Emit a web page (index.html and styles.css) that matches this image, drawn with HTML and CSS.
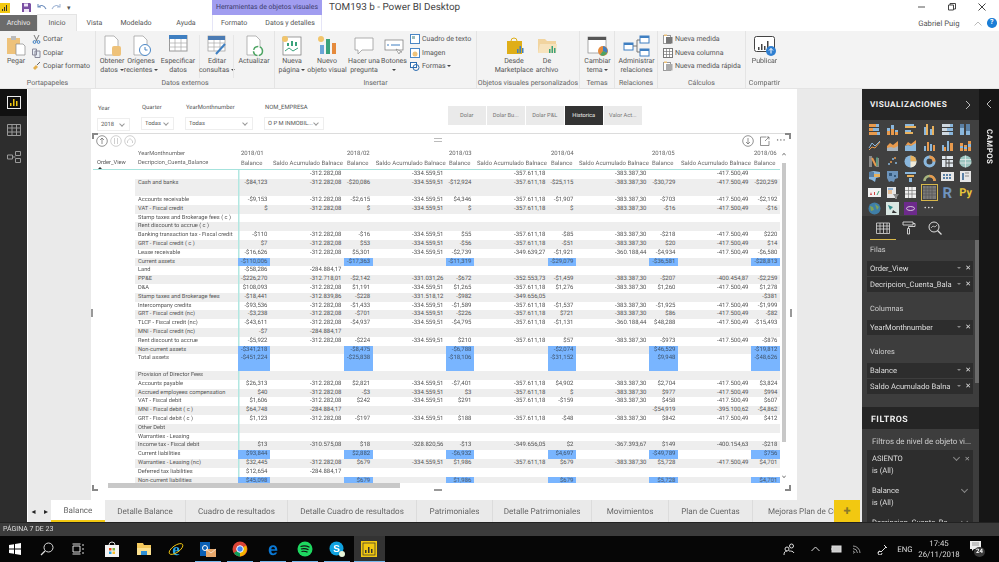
FILE: index.html
```html
<!DOCTYPE html>
<html lang="es">
<head>
<meta charset="utf-8">
<title>TOM193 b - Power BI Desktop</title>
<link rel="stylesheet" href="styles.css">
</head>
<body>
<div class="app">
  <header class="titlebar">
    <div class="qat">
      <svg class="pbi" width="10" height="10" viewBox="0 0 10 10"><rect width="10" height="10" fill="#f2c811"/><path d="M2 8V6h1v2zM4 8V4h1v4zM6 8V2h1v6z" fill="#333"/></svg>
      <svg class="save" width="11" height="11" viewBox="0 0 11 11"><path d="M1 1h8l1 1v8H1z" fill="#7a4fa3"/><path d="M3 1.500h4v3H3zM3 7h5v3H3z" fill="#efe6f7"/></svg>
      <svg class="undo" width="10" height="9" viewBox="0 0 10 9"><path d="M1 1v3h3M1.500 4C3 2 7 1.500 9 6" fill="none" stroke="#6f8fbd" stroke-width="1.100"/></svg>
      <svg class="redo" width="10" height="9" viewBox="0 0 10 9"><path d="M9 1v3H6M8.500 4C7 2 3 1.500 1 6" fill="none" stroke="#a4b8d6" stroke-width="1.100"/></svg>
      <span class="drop">▾</span>
    </div>
    <div class="contextual">Herramientas de objetos visuales</div>
    <div class="doc">TOM193 b - Power BI Desktop</div>
    <div class="winctl">
      <svg width="8" height="8" viewBox="0 0 8 8"><path d="M0 4h7" stroke="#555"/></svg>
      <svg width="8" height="8" viewBox="0 0 8 8"><path d="M.5 2h5v5h-5zM2 2V.5h5.500V6H6" fill="none" stroke="#444"/></svg>
      <svg width="8" height="8" viewBox="0 0 8 8"><path d="M.5.5l7 7M7.500.5l-7 7" stroke="#444"/></svg>
    </div>
  </header>
  <nav class="tabsbar">
    <span class="tab file">Archivo</span>
    <span class="tab home">Inicio</span>
    <span class="tab vista">Vista</span>
    <span class="tab modelado">Modelado</span>
    <span class="tab ayuda">Ayuda</span>
    <span class="ctx-tabs"><span>Formato</span><span>Datos y detalles</span></span>
    <span class="user">Gabriel Puig</span>
    <svg class="collapse" width="8" height="5" viewBox="0 0 8 5"><path d="M.5 4.500L4 1l3.500 3.500" fill="none" stroke="#bbb"/></svg>
    <span class="help">?</span>
  </nav>
  <section class="ribbon">
    <div class="group g-porta">
      <div class="items">
        <div class="item w32"><svg class="ic" width="22" height="22" viewBox="0 0 22 22"><rect x="2" y="3" width="13" height="16" fill="#eec27a"/><rect x="6" y="1" width="5" height="4" fill="#bbb"/><path d="M11 9h7l2 2v9h-9z" fill="#fff" stroke="#888" stroke-width=".7"/></svg><span>Pegar</span></div>
        <div class="smalls">
          <div class="small"><svg width="9" height="10" viewBox="0 0 9 10"><path d="M2 1l3 6M7 1L4 7" stroke="#777" fill="none"/><circle cx="2.500" cy="8" r="1.400" fill="none" stroke="#3f7fc1"/><circle cx="6.500" cy="8" r="1.400" fill="none" stroke="#3f7fc1"/></svg><span>Cortar</span></div>
          <div class="small"><svg width="9" height="10" viewBox="0 0 9 10"><path d="M.5 1h4v6h-4zM3 3h5v6.500H3z" fill="#e8eef5" stroke="#889"/></svg><span>Copiar</span></div>
          <div class="small"><svg width="9" height="10" viewBox="0 0 9 10"><path d="M1 7l3-3 2 2-3 3z" fill="#e4b04f"/><path d="M5 4l3-3" stroke="#666"/></svg><span>Copiar formato</span></div>
        </div>
      </div>
      <div class="glabel">Portapapeles</div>
    </div>
    <div class="group g-datos">
      <div class="items">
        <div class="item w28"><svg class="ic" width="22" height="22" viewBox="0 0 22 22"><path d="M4 1h9l4 4v15H4z" fill="#fff" stroke="#999" stroke-width=".7"/><rect x="11" y="11" width="9" height="10" rx="2" fill="#eec27a"/></svg><span>Obtener<br>datos <i class="car"></i></span></div>
        <div class="item w30"><svg class="ic" width="22" height="22" viewBox="0 0 22 22"><path d="M4 1h9l4 4v15H4z" fill="#fff" stroke="#999" stroke-width=".7"/><circle cx="15" cy="15" r="5.500" fill="#fff" stroke="#4a86c5"/><path d="M15 12v3h2.500" stroke="#4a86c5" fill="none"/></svg><span>Orígenes<br>recientes <i class="car"></i></span></div>
        <div class="item w44"><svg class="ic" width="22" height="22" viewBox="0 0 22 22"><rect x="2.500" y=".5" width="17.500" height="15.500" fill="#fff" stroke="#999"/><rect x="2" y="0" width="18" height="4" fill="#3f7fc1"/><path d="M2 8h18M2 12h18M8 4v12M14 4v12" stroke="#aaa" stroke-width=".7"/></svg><span>Especificar<br>datos</span></div>
        <div class="item w34 sep"><svg class="ic" width="22" height="22" viewBox="0 0 22 22"><rect x="2" y="1" width="17" height="15" fill="#fff" stroke="#999" stroke-width=".7"/><rect x="2" y="1" width="17" height="4" fill="#4b7bb3"/><path d="M2 8h17M2 12h17M8 5v11M14 5v11" stroke="#aaa" stroke-width=".7"/><path d="M10 19l9-10" stroke="#3f7fc1" stroke-width="2"/></svg><span>Editar<br>consultas <i class="car"></i></span></div>
        <div class="item w40 sep"><svg class="ic" width="22" height="22" viewBox="0 0 22 22"><path d="M4 1h9l4 4v15H4z" fill="#fff" stroke="#999" stroke-width=".7"/><circle cx="15" cy="16" r="4.500" fill="#fff" stroke="#4da463" stroke-width="1.500" stroke-dasharray="6 1.500"/></svg><span>Actualizar</span></div>
      </div>
      <div class="glabel">Datos externos</div>
    </div>
    <div class="group g-insertar">
      <div class="items">
        <div class="item w30"><svg class="ic" width="22" height="22" viewBox="0 0 22 22"><rect x="2" y="2" width="18" height="18" fill="#fff" stroke="#777" stroke-width=".7"/><circle cx="4" cy="4" r="3" fill="#f2c56b"/><path d="M6 11V8h2v3zM10 11V6h2v5zM14 11V7h2v4z" fill="#3aa27b"/><path d="M4 16l4-3 4 3 5-3" stroke="#3aa27b" fill="none"/></svg><span>Nueva<br>página <i class="car"></i></span></div>
        <div class="item w40"><svg class="ic" width="22" height="22" viewBox="0 0 22 22"><circle cx="5" cy="4" r="3" fill="#f2c56b"/><rect x="4" y="10" width="4" height="9" fill="#6ba5d8"/><rect x="10" y="4" width="4" height="15" fill="#3aa27b"/><rect x="16" y="8" width="4" height="11" fill="#e58a3c"/></svg><span>Nuevo<br>objeto visual</span></div>
        <div class="item w34"><svg class="ic" width="22" height="22" viewBox="0 0 22 22"><path d="M2 3h18v12H9l-4 4v-4H2z" fill="#fff" stroke="#999" stroke-width=".8"/></svg><span>Hacer una<br>pregunta</span></div>
        <div class="item w26"><svg class="ic" width="22" height="22" viewBox="0 0 22 22"><rect x="2" y="5" width="18" height="10" fill="#fff" stroke="#777" stroke-width=".7"/><path d="M4 10h2M8 10h9" stroke="#3f7fc1"/><path d="M13 14l3 5 1-2 2 0z" fill="#fff" stroke="#777" stroke-width=".6"/></svg><span>Botones<br><i class="car"></i></span></div>
        <div class="smalls s-ins">
          <div class="small"><svg width="10" height="10" viewBox="0 0 10 10"><rect x=".5" y=".5" width="9" height="9" fill="#fff" stroke="#4a86c5"/><path d="M2 2h3v3H2z" fill="#9bb"/></svg><span>Cuadro de texto</span></div>
          <div class="small"><svg width="10" height="10" viewBox="0 0 10 10"><rect x=".5" y=".5" width="9" height="9" fill="#fff" stroke="#4a86c5"/><circle cx="5" cy="6" r="2.500" fill="#eec27a"/></svg><span>Imagen</span></div>
          <div class="small"><svg width="10" height="10" viewBox="0 0 10 10"><rect x=".5" y="1.500" width="6" height="5" fill="#fff" stroke="#2c6cb0"/><circle cx="6" cy="6.500" r="3" fill="none" stroke="#2c6cb0"/></svg><span>Formas <i class="car"></i></span></div>
        </div>
      </div>
      <div class="glabel">Insertar</div>
    </div>
    <div class="group g-obj">
      <div class="items">
        <div class="item w34"><svg class="ic" width="22" height="22" viewBox="0 0 22 22"><path d="M4 6h15v13H4z" fill="#dfae18"/><path d="M8 6a3 3 0 016 0" stroke="#dfae18" fill="none"/><path d="M14 18v-4h1.500v4zM16.500 18v-7H18v7zM19 18v-5h1.500v5z" fill="#3f7fc1"/></svg><span>Desde<br>Marketplace</span></div>
        <div class="item w32"><svg class="ic" width="22" height="22" viewBox="0 0 22 22"><path d="M2 7V4h7l2 2h9v12H2z" fill="#f1d49f"/><path d="M2 18l2-9h17l-1 9z" fill="#f7e3bd"/><path d="M13 18v-4h1.500v4zM15.500 18v-7H17v7zM18 18v-5h1.500v5z" fill="#3aa27b"/></svg><span>De<br>archivo</span></div>
      </div>
      <div class="glabel">Objetos visuales personalizados</div>
    </div>
    <div class="group g-temas">
      <div class="items">
        <div class="item w35"><svg class="ic" width="22" height="22" viewBox="0 0 22 22"><rect x="1" y="2" width="18" height="16" fill="#fff" stroke="#888" stroke-width=".7"/><rect x="1" y="2" width="18" height="3" fill="#555"/><circle cx="16" cy="16" r="5" fill="#e58a3c"/><path d="M16 16V11a5 5 0 014 7z" fill="#3f7fc1"/><path d="M16 16l4 2a5 5 0 01-7 2z" fill="#4da463"/></svg><span>Cambiar<br>tema <i class="car"></i></span></div>
      </div>
      <div class="glabel">Temas</div>
    </div>
    <div class="group g-rel">
      <div class="items">
        <div class="item w43"><svg class="ic" width="30" height="22" viewBox="0 0 30 22"><rect x="2" y="8" width="9" height="7" fill="#fff" stroke="#3f7fc1"/><rect x="2" y="8" width="9" height="2" fill="#3f7fc1"/><rect x="18" y="1" width="9" height="7" fill="#fff" stroke="#3f7fc1"/><rect x="18" y="1" width="9" height="2" fill="#3f7fc1"/><rect x="18" y="14" width="9" height="7" fill="#fff" stroke="#3f7fc1"/><rect x="18" y="14" width="9" height="2" fill="#3f7fc1"/><path d="M11 11h4V5h3M15 11v6h3" stroke="#777" fill="none"/></svg><span>Administrar<br>relaciones</span></div>
      </div>
      <div class="glabel">Relaciones</div>
    </div>
    <div class="group g-calc">
      <div class="items">
        <div class="smalls s-calc">
          <div class="small"><svg width="10" height="10" viewBox="0 0 10 10"><rect x=".5" y="1.500" width="7" height="8" fill="#fff" stroke="#999"/><rect x="3" y="3" width="6.500" height="6.500" fill="#777"/><rect x="1" y=".5" width="3" height="1.500" fill="#eec27a"/></svg><span>Nueva medida</span></div>
          <div class="small"><svg width="10" height="10" viewBox="0 0 10 10"><rect x=".5" y=".5" width="9" height="9" fill="#fff" stroke="#777"/><path d="M.5 3.500h9M.5 6.500h9M3.500.5v9M6.500.5v9" stroke="#777" stroke-width=".7"/></svg><span>Nueva columna</span></div>
          <div class="small"><svg width="10" height="10" viewBox="0 0 10 10"><rect x=".5" y="1.500" width="7" height="8" fill="#fff" stroke="#999"/><rect x="3" y="3" width="6.500" height="6.500" fill="#aaa"/><rect x="1" y=".5" width="3" height="1.500" fill="#eec27a"/></svg><span>Nueva medida rápida</span></div>
        </div>
      </div>
      <div class="glabel">Cálculos</div>
    </div>
    <div class="group g-comp">
      <div class="items">
        <div class="item w37"><svg class="ic" width="24" height="22" viewBox="0 0 24 22"><rect x="1.500" y="1.500" width="20" height="15" rx="2" fill="#fff" stroke="#444"/><path d="M5 15v-3h1.500v3zM8 15v-6h1.500v6zM11 15v-4h1.500v4zM14 15V6h1.500v9z" fill="#444"/><circle cx="18" cy="16" r="5" fill="#2f7fd1"/><path d="M18 13.500v5M16 15.500l2-2 2 2" stroke="#fff" fill="none"/></svg><span>Publicar</span></div>
      </div>
      <div class="glabel">Compartir</div>
    </div>
  </section>

  <main class="workspace">
    <aside class="leftnav">
      <div class="navitem on"><svg width="14" height="13" viewBox="0 0 14 13"><rect x=".5" y=".5" width="13" height="12" fill="none" stroke="#eee"/><path d="M3 10V7h1.500v3zM6 10V3h1.500v7zM9 10V5h1.500v5z" fill="#f2c811"/></svg></div>
      <div class="navitem"><svg width="14" height="12" viewBox="0 0 14 12"><path d="M.5.5h13v11H.5zM.5 4h13M.5 8h13M5 .5v11M9.500.5v11" fill="none" stroke="#9a9a9a"/></svg></div>
      <div class="navitem"><svg width="14" height="12" viewBox="0 0 14 12"><path d="M.5 4h5v4h-5zM8.500.5h5v4h-5zM8.500 7.500h5v4h-5zM5.500 6h3" fill="none" stroke="#9a9a9a"/></svg></div>
    </aside>
    <div class="center">
      <div class="stage">
        <div class="canvas">
          <div class="filters">
            <div class="slicer s-year"><label>Year</label><div class="sbox"><span>2018</span><i class="chev"></i></div></div>
            <div class="slicer s-quarter"><label>Quarter</label><div class="sbox"><span>Todas</span><i class="chev"></i></div></div>
            <div class="slicer s-ym"><label>YearMonthnumber</label><div class="sbox"><span>Todas</span><i class="chev"></i></div></div>
            <div class="slicer s-nom"><label>NOM_EMPRESA</label><div class="sbox"><span>O P M INMOBIL...</span><i class="chev"></i></div></div>
            <div class="btns">
              <span>Dolar</span><span>Dolar Bu...</span><span>Dolar P&amp;L</span><span class="active">Historica</span><span>Valor Act...</span>
            </div>
          </div>
          <div class="visual">
            <i class="corner tl"></i><i class="corner tr"></i><i class="corner bl"></i><i class="corner br"></i>
            <i class="grip gl"></i><i class="grip gr"></i><i class="grip gt"></i><i class="grip gb"></i>
            <div class="vhead">
              <div class="vleft">
                <svg width="12" height="12" viewBox="0 0 12 12"><circle cx="6" cy="6" r="5.300" fill="none" stroke="#666" stroke-width=".7"/><path d="M6 9V3M4 5l2-2 2 2" fill="none" stroke="#666" stroke-width=".7"/></svg>
                <svg width="12" height="12" viewBox="0 0 12 12"><circle cx="6" cy="6" r="5.300" fill="none" stroke="#bbb" stroke-width=".7"/><path d="M4.500 3v6M7.500 3v6" stroke="#bbb" stroke-width=".7"/></svg>
                <svg width="12" height="12" viewBox="0 0 12 12"><circle cx="6" cy="6" r="5.300" fill="none" stroke="#bbb" stroke-width=".7"/><path d="M3.500 8V6l2.500-2.500L8.500 6v2" fill="none" stroke="#bbb" stroke-width=".7"/></svg>
              </div>
              <div class="vright">
                <svg width="12" height="12" viewBox="0 0 12 12"><circle cx="6" cy="6" r="5.300" fill="none" stroke="#666" stroke-width=".7"/><path d="M6 3v6M4 7l2 2 2-2" fill="none" stroke="#666" stroke-width=".7"/></svg>
                <svg width="10" height="10" viewBox="0 0 10 10"><path d="M6 1H.5v8.500H9V5M5 5l4-4M6.500 1H9v2.500" fill="none" stroke="#666" stroke-width=".7"/></svg>
                <span class="dots">···</span>
              </div>
            </div>
            <div class="matrix">
              <div class="r h1"><span></span><span>YearMonthnumber</span><span>2018/01</span><span></span><span>2018/02</span><span></span><span>2018/03</span><span></span><span>2018/04</span><span></span><span>2018/05</span><span></span><span>2018/06</span></div>
              <div class="r h2"><span class="order">Order_View</span><span>Decripcion_Cuenta_Balance</span><span>Balance</span><span>Saldo Acumulado Balnace</span><span>Balance</span><span>Saldo Acumulado Balnace</span><span>Balance</span><span>Saldo Acumulado Balnace</span><span>Balance</span><span>Saldo Acumulado Balnace</span><span>Balance</span><span>Saldo Acumulado Balnace</span><span>Balance</span></div>
              <div class="tbody">
                <div class="r"><span></span><span></span><span></span><span>-312.282,08</span><span></span><span>-334.559,51</span><span></span><span>-357.611,18</span><span></span><span>-383.387,30</span><span></span><span>-417.500,49</span><span></span></div>
                <div class="r g tall"><span></span><span>Cash and banks</span><span>-$84,123</span><span>-312.282,08</span><span>-$20,086</span><span>-334.559,51</span><span>-$12,924</span><span>-357.611,18</span><span>-$25,115</span><span>-383.387,30</span><span>-$30,729</span><span>-417.500,49</span><span>-$20,259</span></div>
                <div class="r"><span></span><span>Accounts receivable</span><span>-$9,153</span><span>-312.282,08</span><span>-$2,615</span><span>-334.559,51</span><span>$4,346</span><span>-357.611,18</span><span>-$1,907</span><span>-383.387,30</span><span>-$703</span><span>-417.500,49</span><span>-$2,192</span></div>
                <div class="r g"><span></span><span>VAT - Fiscal credit</span><span>$</span><span>-312.282,08</span><span>$</span><span>-334.559,51</span><span>$</span><span>-357.611,18</span><span>$</span><span>-383.387,30</span><span>-$16</span><span>-417.500,49</span><span>-$16</span></div>
                <div class="r"><span></span><span>Stamp taxes and Brokerage fees ( c )</span><span></span><span></span><span></span><span></span><span></span><span></span><span></span><span></span><span></span><span></span><span></span></div>
                <div class="r g"><span></span><span>Rent discount to accrue ( c )</span><span></span><span></span><span></span><span></span><span></span><span></span><span></span><span></span><span></span><span></span><span></span></div>
                <div class="r"><span></span><span>Banking transaction tax - Fiscal credit</span><span>-$110</span><span>-312.282,08</span><span>-$16</span><span>-334.559,51</span><span>$55</span><span>-357.611,18</span><span>-$85</span><span>-383.387,30</span><span>-$218</span><span>-417.500,49</span><span>$220</span></div>
                <div class="r g"><span></span><span>GRT - Fiscal credit ( c )</span><span>$7</span><span>-312.282,08</span><span>$53</span><span>-334.559,51</span><span>-$56</span><span>-357.611,18</span><span>-$51</span><span>-383.387,30</span><span>$20</span><span>-417.500,49</span><span>$14</span></div>
                <div class="r"><span></span><span>Lease receivable</span><span>-$16,626</span><span>-312.282,08</span><span>$5,301</span><span>-334.559,51</span><span>-$2,739</span><span>-349.639,27</span><span>-$1,921</span><span>-360.188,44</span><span>-$4,934</span><span>-417.500,49</span><span>-$6,580</span></div>
                <div class="r g"><span></span><span>Current assets</span><span class="h">-$110,006</span><span></span><span class="h">-$17,363</span><span></span><span class="h">-$11,319</span><span></span><span class="h">-$29,079</span><span></span><span class="h">-$36,581</span><span></span><span class="h">-$28,813</span></div>
                <div class="r"><span></span><span>Land</span><span>-$58,286</span><span>-284.884,17</span><span></span><span></span><span></span><span></span><span></span><span></span><span></span><span></span><span></span></div>
                <div class="r g"><span></span><span>PP&amp;E</span><span>-$226,270</span><span>-312.718,01</span><span>-$2,142</span><span>-331.031,26</span><span>-$672</span><span>-352.553,73</span><span>-$1,459</span><span>-383.387,30</span><span>-$207</span><span>-400.454,87</span><span>-$2,259</span></div>
                <div class="r"><span></span><span>D&amp;A</span><span>$108,093</span><span>-312.282,08</span><span>$1,191</span><span>-334.559,51</span><span>$1,265</span><span>-357.611,18</span><span>$1,276</span><span>-383.387,30</span><span>$1,260</span><span>-417.500,49</span><span>$1,278</span></div>
                <div class="r g"><span></span><span>Stamp taxes and Brokerage fees</span><span>-$18,441</span><span>-312.839,86</span><span>-$228</span><span>-331.518,12</span><span>-$982</span><span>-349.656,05</span><span></span><span></span><span></span><span></span><span>-$381</span></div>
                <div class="r"><span></span><span>Intercompany credits</span><span>-$93,536</span><span>-312.282,08</span><span>-$1,433</span><span>-334.559,51</span><span>-$1,589</span><span>-357.611,18</span><span>-$1,537</span><span>-383.387,30</span><span>-$1,925</span><span>-417.500,49</span><span>-$1,999</span></div>
                <div class="r g"><span></span><span>GRT - Fiscal credit (nc)</span><span>-$3,238</span><span>-312.282,08</span><span>-$701</span><span>-334.559,51</span><span>-$226</span><span>-357.611,18</span><span>$721</span><span>-383.387,30</span><span>$86</span><span>-417.500,49</span><span>-$82</span></div>
                <div class="r"><span></span><span>TLCF - Fiscal credit (nc)</span><span>-$43,611</span><span>-312.282,08</span><span>-$4,937</span><span>-334.559,51</span><span>-$4,795</span><span>-357.611,18</span><span>-$1,131</span><span>-360.188,44</span><span>$48,288</span><span>-417.500,49</span><span>-$15,493</span></div>
                <div class="r g"><span></span><span>MNI - Fiscal credit (nc)</span><span>-$7</span><span>-284.884,17</span><span></span><span></span><span></span><span></span><span></span><span></span><span></span><span></span><span></span></div>
                <div class="r"><span></span><span>Rent discount to accrue</span><span>-$5,922</span><span>-312.282,08</span><span>-$224</span><span>-334.559,51</span><span>$210</span><span>-357.611,18</span><span>$57</span><span>-383.387,30</span><span>-$973</span><span>-417.500,49</span><span>-$876</span></div>
                <div class="r g"><span></span><span>Non-current assets</span><span class="h">-$341,218</span><span></span><span class="h">-$8,475</span><span></span><span class="h">-$6,788</span><span></span><span class="h">-$2,074</span><span></span><span class="h">$46,529</span><span></span><span class="h">-$19,812</span></div>
                <div class="r tall2"><span></span><span>Total assets</span><span class="h">-$451,224</span><span></span><span class="h">-$25,838</span><span></span><span class="h">-$18,106</span><span></span><span class="h">-$31,152</span><span></span><span class="h">$9,948</span><span></span><span class="h">-$48,626</span></div>
                <div class="r g"><span></span><span>Provision of Director Fees</span><span></span><span></span><span></span><span></span><span></span><span></span><span></span><span></span><span></span><span></span><span></span></div>
                <div class="r"><span></span><span>Accounts payable</span><span>$26,313</span><span>-312.282,08</span><span>$2,821</span><span>-334.559,51</span><span>-$7,401</span><span>-357.611,18</span><span>$4,902</span><span>-383.387,30</span><span>$2,704</span><span>-417.500,49</span><span>$3,824</span></div>
                <div class="r g"><span></span><span>Accrued employees compensation</span><span>$40</span><span>-312.282,08</span><span>-$3</span><span>-334.559,51</span><span>$3</span><span>-357.611,18</span><span>$</span><span>-383.387,30</span><span>$977</span><span>-417.500,49</span><span>$994</span></div>
                <div class="r"><span></span><span>VAT - Fiscal debit</span><span>$1,606</span><span>-312.282,08</span><span>$242</span><span>-334.559,51</span><span>$291</span><span>-357.611,18</span><span>-$159</span><span>-383.387,30</span><span>$458</span><span>-417.500,49</span><span>$607</span></div>
                <div class="r g"><span></span><span>MNI - Fiscal debit ( c )</span><span>$64,748</span><span>-284.884,17</span><span></span><span></span><span></span><span></span><span></span><span></span><span>-$54,919</span><span>-395.100,62</span><span>-$4,862</span></div>
                <div class="r"><span></span><span>GRT - Fiscal debit ( c )</span><span>$1,123</span><span>-312.282,08</span><span>-$197</span><span>-334.559,51</span><span>$188</span><span>-357.611,18</span><span>-$48</span><span>-383.387,30</span><span>$842</span><span>-417.500,49</span><span>$412</span></div>
                <div class="r g"><span></span><span>Other Debt</span><span></span><span></span><span></span><span></span><span></span><span></span><span></span><span></span><span></span><span></span><span></span></div>
                <div class="r"><span></span><span>Warranties - Leasing</span><span></span><span></span><span></span><span></span><span></span><span></span><span></span><span></span><span></span><span></span><span></span></div>
                <div class="r g"><span></span><span>Income tax - Fiscal debit</span><span>$13</span><span>-310.575,08</span><span>$18</span><span>-328.820,56</span><span>-$13</span><span>-349.656,05</span><span>$2</span><span>-367.393,67</span><span>$149</span><span>-400.154,63</span><span>-$218</span></div>
                <div class="r"><span></span><span>Current liabilities</span><span class="h">$93,844</span><span></span><span class="h">$2,882</span><span></span><span class="h">-$6,932</span><span></span><span class="h">$4,697</span><span></span><span class="h">-$49,789</span><span></span><span class="h">$756</span></div>
                <div class="r g"><span></span><span>Warranties - Leasing (nc)</span><span>$32,445</span><span>-312.282,08</span><span>$679</span><span>-334.559,51</span><span>$1,986</span><span>-357.611,18</span><span>$679</span><span>-383.387,30</span><span>$5,728</span><span>-417.500,49</span><span>$4,701</span></div>
                <div class="r"><span></span><span>Deferred tax liabilities</span><span>$12,654</span><span>-284.884,17</span><span></span><span></span><span></span><span></span><span></span><span></span><span></span><span></span><span></span></div>
                <div class="r g"><span></span><span>Non-current liabilities</span><span class="h">$45,098</span><span></span><span class="h">$679</span><span></span><span class="h">$1,986</span><span></span><span class="h">$679</span><span></span><span class="h">$5,728</span><span></span><span class="h">$4,701</span></div>
              </div>
              <div class="vscroll"><i class="up"></i><b></b><i class="down"></i></div>
              <div class="hscroll"><b></b></div>
            </div>
          </div>
        </div>
      </div>
      <div class="pagetabs">
        <span class="nav n1">◂</span><span class="nav n2">▸</span>
        <span class="pt on w-bal">Balance</span>
        <span class="pt w-dbal">Detalle Balance</span>
        <span class="pt w-cua">Cuadro de resultados</span>
        <span class="pt w-dcua">Detalle Cuadro de resultados</span>
        <span class="pt w-pat">Patrimoniales</span>
        <span class="pt w-dpat">Detalle Patrimoniales</span>
        <span class="pt w-mov">Movimientos</span>
        <span class="pt w-plan">Plan de Cuentas</span>
        <span class="pt w-mej">Mejoras Plan de Cuentas</span>
        <span class="plus">+</span>
      </div>
    </div>
    <aside class="vizpanel">
      <div class="phead"><span>VISUALIZACIONES</span><svg width="6" height="10" viewBox="0 0 6 10"><path d="M1 1l4 4-4 4" fill="none" stroke="#bbb"/></svg></div>
      <div class="vizgrid">
        <svg viewBox="0 0 13 13"><path d="M1 1h7v3H1z" fill="#e89a4d"/><path d="M8 1h3v3H8z" fill="#8ab7dd"/><path d="M1 5h4v3H1z" fill="#e89a4d"/><path d="M5 5h6v3H5z" fill="#8ab7dd"/><path d="M1 9h8v3H1z" fill="#e89a4d"/><path d="M9 9h3v3H9z" fill="#8ab7dd"/></svg>
        <svg viewBox="0 0 13 13"><path d="M1 5h3v7H1zM5 2h3v10H5zM9 7h3v5H9z" fill="#8ab7dd"/><path d="M1 8h3v4H1zM5 6h3v6H5zM9 9h3v3H9z" fill="#e89a4d"/></svg>
        <svg viewBox="0 0 13 13"><path d="M1 1h9v2H1zM1 7h6v2H1z" fill="#8ab7dd"/><path d="M1 3h11v2H1zM1 9h8v2H1z" fill="#e8b15d"/></svg>
        <svg viewBox="0 0 13 13"><path d="M1 4h2v8H1zM7 6h2v6H7z" fill="#8ab7dd"/><path d="M3 1h2v11H3zM9 3h2v9H9z" fill="#e8b15d"/></svg>
        <svg viewBox="0 0 13 13"><path d="M1 1h8v3H1zM1 9h7v3H1zM1 5h5v3H1z" fill="#cfd8e0"/><path d="M9 1h3v3H9zM8 9h4v3H8zM6 5h6v3H6z" fill="#8ab7dd"/></svg>
        <svg viewBox="0 0 13 13"><path d="M1 1h4v11H1zM7 1h4v11H7z" fill="#8ab7dd"/><path d="M1 1h4v4H1zM7 1h4v7H7z" fill="#5a80a5"/></svg>
        <svg viewBox="0 0 13 13"><path d="M1 11l3-3 3 1 5-6" fill="none" stroke="#e89a4d"/><path d="M1 9l3-5 3 3 5-5" fill="none" stroke="#8ab7dd"/></svg>
        <svg viewBox="0 0 13 13"><path d="M1 12V7l3-3 3 2 5-4v10z" fill="#e89a4d"/><path d="M1 12V9l4-1 3 1 4-2v5z" fill="#aab4bc"/></svg>
        <svg viewBox="0 0 13 13"><path d="M1 7l3-4 3 2 5-4v5L7 7 4 6z" fill="#e89a4d"/><path d="M1 12V7l3-1 3 1 5-3v8z" fill="#8ab7dd"/></svg>
        <svg viewBox="0 0 13 13"><path d="M1 7h2v5H1zM7 5h2v7H7z" fill="#8ab7dd"/><path d="M4 3h2v9H4zM10 6h2v6h-2z" fill="#e89a4d"/></svg>
        <svg viewBox="0 0 13 13"><path d="M1 6h2v6H1zM6 2h2v10H6z" fill="#8ab7dd"/><path d="M3 8h2v4H3zM9 4h3v8H9z" fill="#e89a4d"/></svg>
        <svg viewBox="0 0 13 13"><path d="M1 4h3v8H1zM5 6h3v6H5zM9 2h3v10H9z" fill="#e89a4d"/><path d="M1 7h3v2H1zM5 8h3v2H5zM9 5h3v3H9z" fill="#8ab7dd"/></svg>
        <svg viewBox="0 0 13 13"><path d="M1 1h3v11H1zM8 3h3v9H8z" fill="#8a8a8a"/><path d="M4 3l4 8" stroke="#e89a4d" stroke-width="2"/><path d="M9 2v9" stroke="#3aa27b"/></svg>
        <svg viewBox="0 0 13 13"><g fill="#8ab7dd"><circle cx="3" cy="9" r="1"/><circle cx="7" cy="4" r="1"/><circle cx="10" cy="8" r="1"/></g><g fill="#e89a4d"><circle cx="5" cy="7" r="1"/><circle cx="9" cy="3" r="1"/></g></svg>
        <svg viewBox="0 0 13 13"><circle cx="6.500" cy="6.500" r="6" fill="#8ab7dd"/><path d="M6.500 6.500V.5a6 6 0 016 6z" fill="#e8b15d"/><path d="M6.500 6.500l6 0a6 6 0 01-6 6z" fill="#f0ead8"/></svg>
        <svg viewBox="0 0 13 13"><circle cx="6.500" cy="6.500" r="4.500" fill="none" stroke="#8ab7dd" stroke-width="3"/><path d="M6.500 2a4.500 4.500 0 014.500 4.500" fill="none" stroke="#e89a4d" stroke-width="3"/></svg>
        <svg viewBox="0 0 13 13"><rect x="1" y="1" width="11" height="11" fill="#dfe6ec"/><path d="M1 4.500h11M5 1v11M8 4.500v7.500M5 8h7" stroke="#444"/></svg>
        <svg viewBox="0 0 13 13"><circle cx="6.500" cy="6.500" r="6" fill="#9cc5c0"/><path d="M1 4.500h11M.5 8h12M6.500.5v12" stroke="#eee" stroke-width=".7"/></svg>
        <svg viewBox="0 0 13 13"><path d="M1 2l5-1 6 1v5l-4 1-1 4-3-2-3-1z" fill="#8ab7dd"/><path d="M1 2h5v5H1z" fill="#5a80a5"/><path d="M6 4h6v3H6z" fill="#e8b15d"/></svg>
        <svg viewBox="0 0 13 13"><path d="M1 1h11v7l-3 1-1 3-3-1-2 1-2-4z" fill="#6d94bc"/><path d="M3 3h3v3H3zM8 5h2v2H8z" fill="#33587c"/></svg>
        <svg viewBox="0 0 13 13"><path d="M1 2h11v2H1z" fill="#8ab7dd"/><path d="M3 5h7v2H3z" fill="#e8b15d"/><path d="M5 8h3v4H5z" fill="#8ab7dd"/></svg>
        <svg viewBox="0 0 13 13"><path d="M1.500 11a5 5 0 0110 0" fill="none" stroke="#a7b57e" stroke-width="2.500"/><path d="M6.500 6a5 5 0 015 5" fill="none" stroke="#e89a4d" stroke-width="2.500"/></svg>
        <svg viewBox="0 0 13 13"><rect x="0" y="2" width="13" height="9" fill="#e6e6e6"/><path d="M2 5h9M2 8h9" stroke="#5a80a5" stroke-width="2" stroke-dasharray="2 1"/></svg>
        <svg viewBox="0 0 13 13"><rect x="1" y="1" width="11" height="11" fill="#e6e6e6"/><path d="M3 3h2v7H3z" fill="#5a80a5"/><path d="M6 3h4M6 6h4" stroke="#8a8a8a"/></svg>
        <svg viewBox="0 0 13 13"><rect x="0" y="2" width="13" height="9" fill="#f2f2f2"/><path d="M2 9l1-3 1 3zM6 9V6h1v3z" fill="#c44"/><path d="M9 9l2-4" stroke="#3aa27b"/></svg>
        <svg viewBox="0 0 13 13"><rect x="1" y="1" width="9" height="11" fill="#e6e6e6"/><path d="M2 3h5" stroke="#3f7fc1"/><path d="M2 5h4M2 7h4" stroke="#e89a4d"/><path d="M7 8h6l-2 3v2h-2v-2z" fill="#8a8a8a"/></svg>
        <svg viewBox="0 0 13 13"><rect x="1" y="1" width="11" height="11" fill="#eee"/><path d="M1 4.500h11M1 8h11M4.500 1v11M8 1v11" stroke="#777" stroke-width=".7"/></svg>
        <svg class="sel" viewBox="0 0 13 13"><rect x="0" y="0" width="13" height="13" fill="#7a7a7a"/><path d="M0 3h13M0 6h13M0 9h13M3 0v13M6 0v13M9 0v13" stroke="#555" stroke-width=".7"/></svg>
        <span class="rlang">R</span>
        <span class="pylang">Py</span>
        <svg viewBox="0 0 13 13"><circle cx="6.500" cy="6.500" r="6" fill="#3f7fa8"/><path d="M2 4l3 1 1 3-3 1zM7 2l4 3-2 3z" fill="#7fa35a"/></svg>
        <svg viewBox="0 0 13 13"><rect width="13" height="13" fill="#d9e6e2"/><path d="M2 3l5 2-3 3z" fill="#2e8b8b"/><path d="M7 8l4 3-5 0z" fill="#333"/></svg>
        <svg viewBox="0 0 13 13"><rect width="13" height="13" fill="#6d2a8c"/><ellipse cx="6.500" cy="6.500" rx="4" ry="2" fill="none" stroke="#eee" stroke-width=".8"/></svg>
        <span class="more">···</span>
      </div>
      <div class="viztabs">
        <svg class="cur" width="14" height="13" viewBox="0 0 14 13"><path d="M.5 2h13v10.500H.5zM.5 5h13M.5 8h13M4 2v10M7.500 2v10M11 2v10" fill="none" stroke="#ddd" stroke-width=".8"/></svg>
        <svg width="14" height="14" viewBox="0 0 14 14"><path d="M1 1h10v3H1zM11 2.500h2v3H6.500v2M5.500 7.500h2V13h-2z" fill="none" stroke="#ddd" stroke-width=".9"/></svg>
        <svg width="14" height="14" viewBox="0 0 14 14"><circle cx="6" cy="6" r="5" fill="none" stroke="#ddd"/><path d="M9.500 9.500l4 4" stroke="#ddd" stroke-width="1.300"/><path d="M3 7l2-2 2 1 2-2" fill="none" stroke="#ddd" stroke-width=".7"/></svg>
      </div>
      <div class="fields">
        <h4>Filas</h4>
        <div class="pill"><span>Order_View</span><i class="mini"></i><b>✕</b></div>
        <div class="pill"><span>Decripcion_Cuenta_Bala</span><i class="mini"></i><b>✕</b></div>
        <h4>Columnas</h4>
        <div class="pill"><span>YearMonthnumber</span><i class="mini"></i><b>✕</b></div>
        <h4>Valores</h4>
        <div class="pill"><span>Balance</span><i class="mini"></i><b>✕</b></div>
        <div class="pill"><span>Saldo Acumulado Balna</span><i class="mini"></i><b>✕</b></div>
        <i class="pscroll"></i>
      </div>
      <div class="phead filtros"><span>FILTROS</span></div>
      <div class="filterlist">
        <h5>Filtros de nivel de objeto vi...</h5>
        <div class="fcard"><div><span>ASIENTO</span><i class="chevw"></i><b>✕</b></div><div>is (All)</div></div>
        <div class="fcard"><div><span>Balance</span><i class="chevw"></i></div><div>is (All)</div></div>
        <div class="fcard"><div><span>Decripcion_Cuenta_Ba...</span><i class="chevw"></i></div></div>
      </div>
    </aside>
    <aside class="campos">
      <svg width="6" height="10" viewBox="0 0 6 10"><path d="M5 1L1 5l4 4" fill="none" stroke="#bbb"/></svg>
      <span>CAMPOS</span>
    </aside>
  </main>
  <div class="status">PÁGINA 7 DE 23</div>
  <footer class="taskbar">
    <div class="tb-left">
      <span class="cell"><svg width="12" height="12" viewBox="0 0 12 12"><path d="M0 2l5-.8V5.600H0zM6 1l6-1v5.600H6zM0 6.400h5v4.400L0 10zM6 6.400h6V12l-6-1z" fill="#fff"/></svg></span>
      <span class="cell"><svg width="14" height="14" viewBox="0 0 14 14"><circle cx="8.500" cy="5.500" r="4.500" fill="none" stroke="#ddd"/><path d="M5 9l-4 4" stroke="#ddd" stroke-width="1.300"/></svg></span>
      <span class="cell"><svg width="14" height="12" viewBox="0 0 14 12"><path d="M1 3h7v6H1zM.5 1h8M.5 11h8M11 1v2M11 5v2M11 9v2" fill="none" stroke="#ddd"/></svg></span>
      <span class="cell"><svg width="16" height="16" viewBox="0 0 16 16"><rect x="1" y="4" width="14" height="12" fill="#f4f4f4"/><path d="M5 4a3 3 0 016 0" fill="none" stroke="#ddd"/><path d="M5 7h2.500v2.500H5z" fill="#e64a19"/><path d="M8.500 7H11v2.500H8.500z" fill="#7cb342"/><path d="M5 10.500h2.500V13H5z" fill="#29a5e0"/><path d="M8.500 10.500H11V13H8.500z" fill="#fbc02d"/></svg></span>
      <span class="cell"><svg width="16" height="16" viewBox="0 0 16 16"><path d="M1 2h6l1 2h7v10H1z" fill="#f4c95d"/><path d="M1 7h14v7H1z" fill="#fbe08f"/><path d="M5 10h6v4H5z" fill="#2e8fd6"/></svg></span>
      <span class="cell"><svg width="16" height="16" viewBox="0 0 16 16"><text x="8" y="14" text-anchor="middle" class="ie">e</text><ellipse cx="8" cy="8" rx="8" ry="3.500" fill="none" stroke="#f2c811" transform="rotate(-35 8 8)" stroke-width=".9"/></svg></span>
      <span class="cell run"><svg width="16" height="16" viewBox="0 0 16 16"><rect y="1" width="10" height="14" fill="#0a5fb4"/><rect x="6" y="8" width="10" height="8" fill="#e8a86b"/><path d="M6 8l5 4 5-4" fill="none" stroke="#fff" stroke-width=".6"/><circle cx="5" cy="7" r="2.500" fill="none" stroke="#fff"/></svg></span>
      <span class="cell run"><svg width="16" height="16" viewBox="0 0 16 16"><circle cx="8" cy="8" r="7.500" fill="#db4437"/><path d="M8 8L2 12a7.500 7.500 0 006 3.500z" fill="#0f9d58"/><path d="M8 8l6-3.500a7.500 7.500 0 01-6 11z" fill="#f4b400"/><circle cx="8" cy="8" r="3.300" fill="#4285f4" stroke="#fff"/></svg></span>
      <span class="cell run"><svg width="16" height="16" viewBox="0 0 16 16"><text x="8" y="14" text-anchor="middle" class="edge">e</text></svg></span>
      <span class="cell run"><svg width="16" height="16" viewBox="0 0 16 16"><circle cx="8" cy="8" r="7.500" fill="#1ed760"/><path d="M3.500 5.500c3-1 6-.8 9 .8M4 8c3-.8 5-.5 7.500.7M4.500 10.500c2-.5 4-.3 6 .6" fill="none" stroke="#111" stroke-width="1.200"/></svg></span>
      <span class="cell run"><svg width="16" height="16" viewBox="0 0 16 16"><circle cx="7.500" cy="7.500" r="7" fill="#0fa2e0"/><text x="7.500" y="11" text-anchor="middle" class="sk">S</text><circle cx="13" cy="13" r="3" fill="#e6f3d8"/></svg></span>
      <span class="cell run t-active"><svg width="16" height="16" viewBox="0 0 16 16"><rect width="16" height="16" fill="#f2c811"/><rect x="2" y="2" width="12" height="12" fill="none" stroke="#333" stroke-width=".7"/><path d="M4 12V9h1.500v3zM7 12V6h1.500v6zM10 12V8h1.500v4z" fill="#333"/></svg></span>
    </div>
    <div class="tb-right">
      <svg width="12" height="12" viewBox="0 0 12 12"><circle cx="4" cy="6" r="2" fill="none" stroke="#ddd"/><circle cx="8.500" cy="3" r="2" fill="none" stroke="#ddd"/><path d="M1 12c0-3 1-4 3-4M6 8c2 0 4 0 5 2" fill="none" stroke="#ddd"/></svg>
      <svg width="9" height="6" viewBox="0 0 9 6"><path d="M.5 5l4-4 4 4" fill="none" stroke="#ddd"/></svg>
      <svg width="11" height="8" viewBox="0 0 11 8"><rect x="1" y="1" width="9" height="6" fill="#ccc" stroke="#ddd"/><path d="M0 3v2" stroke="#ddd"/></svg>
      <svg width="10" height="10" viewBox="0 0 10 10"><path d="M1 9h1M3 9a3 3 0 00-2-2M5.500 9A5 5 0 001 4.500M8 9a7 7 0 00-7-7" fill="none" stroke="#bbb" stroke-width=".8"/></svg>
      <svg width="11" height="11" viewBox="0 0 11 11"><path d="M1 9l2-2 1 1 5-5M7 1l3 3M3 7a2 2 0 102 2" fill="none" stroke="#ddd"/></svg>
      <span class="lang">ENG</span>
      <span class="clock">17:45<br>26/11/2018</span>
      <span class="notif"><svg width="11" height="10" viewBox="0 0 11 10"><path d="M0 0h11v8H4L2 10V8H0z" fill="#eee"/><path d="M2 2h7M2 4h7" stroke="#777" stroke-width=".7"/></svg><b>24</b></span>
    </div>
  </footer>
</div>
</body>
</html>
```

FILE: styles.css
```css
* { box-sizing: border-box; }
html, body { margin: 0; padding: 0; height: 100%; overflow: hidden; }
body { font-family: Roboto, "Noto Sans", sans-serif; color: #444; background: #000; text-rendering: geometricPrecision; }
.app { width: 999px; height: 562px; display: flex; flex-direction: column; overflow: hidden; position: relative; filter: blur(.3px); }

/* title bar */
.titlebar { height: 15px; background: #fff; display: flex; align-items: flex-start; flex: none; }
.qat { width: 212px; display: flex; align-items: center; height: 15px; color: #555; }
.qat .save { margin-left: 11px; }
.qat .undo { margin-left: 5px; }
.qat .redo { margin-left: 4px; }
.qat .drop { margin-left: 6px; font-size: 7px; }
.contextual { width: 110px; height: 15px; background: #a19df0; color: #3c3c6a; font-size: 6.900px; line-height: 15px; text-align: center; white-space: nowrap; }
.doc { margin-left: 7px; font-size: 9.900px; line-height: 15px; color: #444; white-space: nowrap; }
.winctl { margin-left: auto; display: flex; gap: 22px; padding: 3px 13px 0 0; }

/* tabs */
.tabsbar { height: 16px; background: #fff; display: flex; align-items: stretch; font-size: 7px; flex: none; color: #555; }
.tab { display: flex; align-items: center; justify-content: center; white-space: nowrap; }
.file { width: 37px; background: #6b6b6b; color: #eee; }
.home { width: 40px; background: #f3f3f3; margin-top: -1px; border: 1px solid #e4e4e4; border-bottom: 0; }
.vista { width: 35px; }
.modelado { width: 48px; }
.ayuda { width: 52px; }
.ctx-tabs { width: 110px; display: flex; align-items: center; background: #fff; box-shadow: inset 1px 0 #e5e5f7, inset -1px 0 #e5e5f7; }
.ctx-tabs span { white-space: nowrap; }
.ctx-tabs span:first-child { margin-left: 9px; }
.ctx-tabs span:last-child { margin-left: 18px; }
.user { margin-left: auto; align-self: center; font-size: 7.700px; white-space: nowrap; }
.collapse { align-self: center; margin-left: 14px; flex: none; }
.help { align-self: center; width: 9.500px; height: 9.500px; border-radius: 50%; background: #1b7ed6; color: #fff; font-size: 7px; line-height: 9.500px; text-align: center; font-weight: 700; margin: 0 2.500px 0 5.500px; }

/* ribbon */
.ribbon { height: 58px; background: #f3f3f3; display: flex; flex: none; border-bottom: 1px solid #e4e4e4; font-size: 7px; color: #555; }
.group { display: flex; flex-direction: column; border-right: 1px solid #e4e4e4; height: 57px; flex: none; }
.g-porta { width: 96px; }
.g-datos { width: 179px; padding-left: 2px; }
.g-insertar { width: 202px; padding-left: 2px; }
.g-obj { width: 103px; padding-left: 20px; }
.g-temas { width: 35px; }
.g-rel { width: 43px; }
.g-calc { width: 88px; }
.g-comp { width: 37px; border-right: 0; }
.items { height: 47px; display: flex; padding-top: 4px; }
.g-obj .glabel { margin-left: -20px; }
.g-datos .glabel, .g-insertar .glabel { margin-left: -2px; }
.glabel { text-align: center; white-space: nowrap; line-height: 10px; color: #666; }
.item { display: flex; flex-direction: column; align-items: center; text-align: center; line-height: 9px; white-space: nowrap; flex: none; }
.item .ic { height: 22px; flex: none; }
.sep { box-shadow: -1px 0 #e6e6e6; }
.w26 { width: 26px; } .w28 { width: 28px; } .w30 { width: 30px; } .w32 { width: 32px; } .w34 { width: 34px; }
.w35 { width: 35px; } .w37 { width: 37px; } .w40 { width: 40px; } .w43 { width: 43px; } .w44 { width: 44px; }
.car { display: inline-block; width: 0; height: 0; border: 2px solid transparent; border-top-color: #444; border-bottom: 0; vertical-align: middle; }
.smalls { display: flex; flex-direction: column; gap: 3.500px; margin-top: -1px; }
.s-ins { padding-left: 3px; }
.s-calc { padding-left: 5px; }
.small { display: flex; align-items: center; gap: 2px; height: 10px; white-space: nowrap; }

/* workspace */
.workspace { height: 433px; display: flex; flex: none; }
.leftnav { width: 28px; background: #2d2d2d; flex: none; border-right: 1px solid #fff; }
.navitem { height: 27px; display: flex; align-items: center; justify-content: center; }
.navitem.on { background: #111; }
.center { flex: 1; display: flex; flex-direction: column; min-width: 0; }
.stage { height: 411px; background: #eaeaea; padding-left: 63px; flex: none; overflow: hidden; }
.canvas { width: 706px; height: 411px; background: #fff; padding-left: 2px; }
.filters { height: 44px; display: flex; padding: 15px 0 0 4px; }
.slicer { display: flex; flex-direction: column; flex: none; }
.slicer label { font-size: 5.900px; line-height: 9px; height: 13px; padding-left: 1px; color: #555; white-space: nowrap; }
.sbox { height: 13px; border: 1px solid #eee; display: flex; align-items: center; justify-content: space-between; padding: 0 4px 0 3px; font-size: 5.800px; color: #555; white-space: nowrap; }
.chev { width: 4px; height: 4px; border-right: 1px solid #999; border-bottom: 1px solid #999; transform: rotate(45deg); margin: -2px 1px 0 0; flex: none; }
.s-year { width: 33px; margin-top: 1px; }
.s-quarter { width: 33px; margin-left: 11px; }
.s-ym { width: 68px; margin-left: 11px; }
.s-nom { width: 60px; margin-left: 11px; }
.btns { display: flex; gap: 1.500px; margin: 2px 0 0 124px; height: 19px; }
.btns span { width: 37.500px; background: #eaeaea; color: #777; font-size: 5.700px; display: flex; align-items: center; justify-content: center; white-space: nowrap; }
.btns .active { background: #333; color: #eee; }

.visual { position: relative; width: 697px; height: 357px; border-top: 1px solid #dcdcdc; }
.corner { position: absolute; width: 6px; height: 6px; border: 0 solid #888; }
.tl { left: -1px; top: -1px; border-width: 2px 0 0 2px; }
.tr { right: -1px; top: -1px; border-width: 2px 2px 0 0; }
.bl { left: -1px; bottom: -1px; border-width: 0 0 2px 2px; }
.br { right: -1px; bottom: -1px; border-width: 0 2px 2px 0; }
.grip { position: absolute; background: #999; }
.gl { left: -2px; top: 175px; width: 2px; height: 8px; }
.gr { right: -2px; top: 175px; width: 2px; height: 8px; }
.gt { left: 341px; top: 4px; width: 8px; height: 4px; background: none; border-top: 1px solid #bbb; border-bottom: 1px solid #bbb; }
.gb { left: 341px; bottom: -1px; width: 8px; height: 2px; }
.vhead { height: 15px; display: flex; justify-content: space-between; align-items: flex-start; padding: 1px 4px 0 3px; }
.vleft { display: flex; gap: 2px; }
.vright { display: flex; gap: 6px; align-items: center; }
.dots { font-size: 9px; font-weight: 700; line-height: 10px; color: #666; letter-spacing: .5px; }

.matrix { position: relative; font-size: 6px; color: #555; }
.r { display: grid; grid-template-columns: 42px 103px 32px 74px 28.700px 73.300px 28px 74px 28px 73px 29px 73px 29px; height: 8.800px; line-height: 8.800px; width: 687px; white-space: nowrap; }
.r > span { padding-right: 2.500px; text-align: right; overflow: hidden; }
.r > span:nth-child(2) { padding: 0 0 0 3px; text-align: left; overflow: visible; font-size: 5.700px; }
.r > span:nth-child(3) { box-shadow: inset 1.500px 0 #b2e7e1; }
.r.g > span + span { background: #eeeeee; }
.r > span.h, .r.g > span.h { background: #79b5ff; box-shadow: none; color: #40566f; }
.tall { height: 17px; }
.tall2 { height: 16.600px; }
.h1 { line-height: 10px; height: 10px; color: #666; }
.h2 { height: 11.300px; line-height: 9px; color: #666; border-bottom: 1.500px solid #a6e3dd; }
.h1 > span, .h2 > span { text-align: left !important; padding: 0 0 0 3px; overflow: visible; box-shadow: none !important; }
.h2 .order { padding-left: 4px; color: #555; position: relative; font-size: 5.700px; }
.h2 .order::after { content: ""; position: absolute; left: 5px; bottom: 0; border: 2px solid transparent; border-bottom-color: #333; border-top: 0; }
.tbody { height: 313px; overflow: hidden; }
.vscroll { position: absolute; right: 4px; top: 4px; width: 4px; height: 325px; display: flex; flex-direction: column; align-items: center; }
.vscroll b { width: 4px; height: 279px; background: #c8c8c8; margin: 6px 0 32px; flex: none; }
.vscroll i { width: 4px; height: 4px; border: solid #777; border-width: 1px 0 0 1px; transform: rotate(45deg) scale(.7); flex: none; }
.vscroll .down { transform: rotate(225deg) scale(.7); }
.hscroll { position: absolute; left: 4px; top: 334px; width: 684px; height: 5px; }
.hscroll b { display: block; margin-left: 11px; width: 292px; height: 5px; background: #c8c8c8; }

/* page tabs */
.pagetabs { height: 22px; background: #eaeaea; display: flex; align-items: stretch; font-size: 8.100px; color: #666; flex: none; overflow: hidden; }
.nav { flex: none; display: flex; align-items: center; justify-content: center; font-size: 8px; color: #222; }
.n1 { width: 11px; margin-right: 2px; }
.n2 { width: 10px; }
.pt { display: flex; align-items: center; justify-content: center; border-right: 1px solid #dcdcdc; white-space: nowrap; flex: none; overflow: hidden; }
.pt.on { background: #fff; border-bottom: 2px solid #f2c811; border-right: 0; }
.w-bal { width: 54px; } .w-dbal { width: 81px; } .w-cua { width: 102px; } .w-dcua { width: 129px; } .w-pat { width: 76px; }
.w-dpat { width: 99px; } .w-mov { width: 77px; } .w-plan { width: 84px; }
.w-mej { width: 81px; justify-content: flex-start; padding-left: 15px; border: 0; }
.plus { width: 26px; flex: none; background: #f2c811; color: #8a7a2a; font-size: 13px; font-weight: 700; display: flex; align-items: center; justify-content: center; }

/* viz panel */
.vizpanel { width: 117px; flex: none; background: #3d3d3d; display: flex; flex-direction: column; overflow: hidden; }
.phead { height: 31px; background: #252525; color: #eee; font-weight: 700; font-size: 8.200px; letter-spacing: .5px; display: flex; align-items: center; justify-content: space-between; padding: 0 8px; flex: none; }
.vizgrid { height: 96px; flex: none; background: #404040; display: grid; grid-template-columns: repeat(6, 18.300px); grid-auto-rows: 15.700px; padding: 2px 0 0 3px; align-items: center; justify-items: center; }
.vizgrid svg { width: 13px; height: 13px; display: block; }
.vizgrid .sel { outline: 1px solid #d8b84a; outline-offset: 1px; }
.rlang { color: #6f93bd; font-size: 15px; font-weight: 700; line-height: 14px; }
.pylang { color: #e8c53a; font-size: 11px; font-weight: 700; line-height: 14px; }
.more { color: #ddd; font-size: 10px; font-weight: 700; letter-spacing: .5px; }
.viztabs { height: 24px; background: #333; display: flex; gap: 12px; padding: 5px 0 0 14px; flex: none; position: relative; }
.viztabs::after { content: ""; position: absolute; left: 8px; bottom: 0; width: 26px; height: 1px; background: #d8b84a; }
.fields { height: 167px; padding: 3px 6px 0 5px; flex: none; position: relative; font-size: 7.600px; color: #ddd; }
.fields h4 { margin: 0; font-weight: 400; color: #ccc; font-size: 7.400px; height: 18px; line-height: 14px; padding-left: 3px; }
.fields h4 ~ h4 { margin-top: 7.500px; height: 21px; line-height: 20px; }
.pill { height: 14.500px; margin-bottom: 1.500px; background: #2d2d2d; display: flex; align-items: center; padding: 0 2px 0 3px; white-space: nowrap; }
.pill span { flex: 1; overflow: hidden; }
.mini { width: 0; height: 0; border: 2.500px solid transparent; border-top-color: #888; border-bottom: 0; margin: 0 4px; }
.pill b { font-size: 7px; font-weight: 400; color: #ddd; }
.pscroll { position: absolute; right: 0; top: 0; width: 4px; height: 143px; background: #6a6a6a; }
.filtros { height: 22px; font-size: 8.800px; padding: 3px 0 0 9px; }
.filterlist { flex: 1; padding: 8px 6px 0 5px; background: #3d3d3d; font-size: 7.600px; color: #ddd; overflow: hidden; }
.filterlist h5 { margin: 0 0 4px; font-weight: 400; font-size: 7.900px; line-height: 9px; padding-left: 5px; color: #ccc; white-space: nowrap; }
.fcard { height: 31.500px; margin-bottom: .5px; background: #2d2d2d; padding: 3px 3px 0 5px; line-height: 12px; }
.fcard > div { display: flex; align-items: center; white-space: nowrap; }
.fcard span { flex: 1; overflow: hidden; }
.chevw { width: 5px; height: 5px; border-right: 1px solid #888; border-bottom: 1px solid #888; transform: rotate(45deg); margin: -3px 3px 0 0; flex: none; }
.fcard b { font-size: 6.500px; font-weight: 400; color: #aaa; margin-left: 3px; }
.campos { width: 20px; flex: none; background: #161616; display: flex; flex-direction: column; align-items: center; padding-top: 10px; }
.campos span { writing-mode: vertical-rl; color: #eee; font-weight: 700; font-size: 7.800px; margin-top: 20px; letter-spacing: .5px; }

/* status + taskbar */
.status { height: 14px; background: #3b3b3b; color: #ddd; font-size: 7px; line-height: 13px; padding-left: 3px; border-top: 1px solid #222; flex: none; }
.taskbar { height: 26px; background: #060606; display: flex; justify-content: space-between; flex: none; }
.tb-left { display: grid; grid-template-columns: repeat(12, 32.200px); margin-left: -1px; justify-items: center; }
.cell { width: 26px; height: 26px; display: flex; align-items: center; justify-content: center; }
.run { border-bottom: 1px solid #76b9ed; }
.ie { font: 700 17px "Liberation Serif", serif; fill: #2aa7e6; }
.edge { font: 700 18px "Liberation Sans", sans-serif; fill: #0a78d4; }
.sk { font: 700 10px "Liberation Sans", sans-serif; fill: #fff; }
.t-active { width: 31px; background: #333; }
.tb-right { display: grid; grid-template-columns: 22px 30px 12px 30px 20px 26px 42px 34px; align-items: center; justify-items: center; color: #ddd; font-size: 7.800px; padding-right: 5px; }
.clock { text-align: center; line-height: 11.500px; white-space: nowrap; }
.notif { position: relative; width: 14px; height: 16px; }
.notif b { position: absolute; left: 4px; top: 6px; width: 11px; height: 10px; border-radius: 50%; background: #3a3a3a; font-size: 6px; line-height: 10px; text-align: center; color: #fff; }
```
